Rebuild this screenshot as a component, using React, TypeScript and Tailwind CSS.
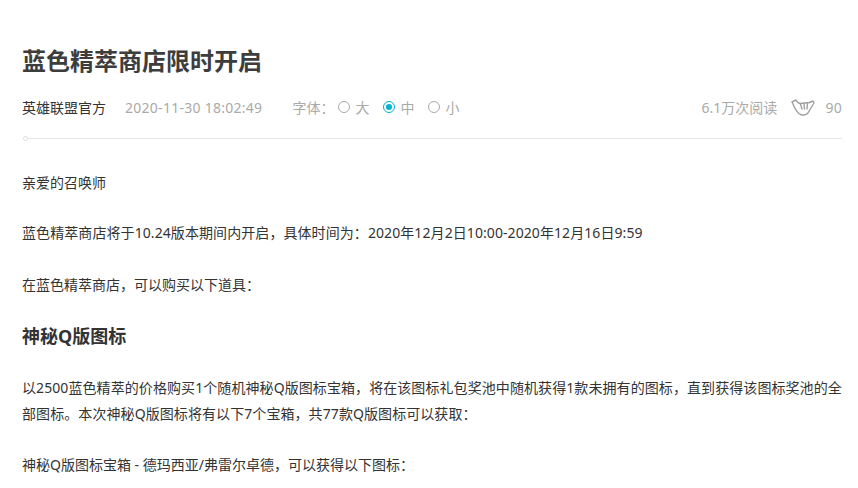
const font = "font-['Noto_Sans','Noto_Sans_CJK_SC',sans-serif]";

const Radio = ({ label, checked }: { label: string; checked?: boolean }) => (
  <span className="flex items-center mr-[14px]">
    {checked ? (
      <span className="w-[12px] h-[12px] rounded-full border border-[#00b2cc] flex items-center justify-center mr-[5px]">
        <span className="w-[6px] h-[6px] rounded-full bg-[#00b2cc]" />
      </span>
    ) : (
      <span className="w-[12px] h-[12px] rounded-full border border-[#aaaaaa] mr-[5px]" />
    )}
    {label}
  </span>
);

const HandIcon = () => (
  <svg width="24" height="17" viewBox="0 0 24 17" fill="none" stroke="#a0a0a0" strokeWidth="1.4" strokeLinejoin="round" strokeLinecap="round">
    <path d="M1 3 L5 1 C6 3 7.5 4.5 9.5 4.5 L18.5 3.5 L22 2 L23 4 L19 10.5 C17.5 14.5 15.5 16 12.5 16 L10.5 16 C6.5 15 3.5 9 1 3 Z" />
    <path d="M9.5 5 L11 10 M13 4.5 L13.5 10 M16.5 4 L16 10" />
  </svg>
);

export default function App() {
  return (
    <div className={`${font} w-[858px] h-[488px] overflow-hidden bg-white pl-[22px] pr-[16px] pt-[42px]`}>
      <h1 className="text-[24px] leading-[38px] font-bold text-[#3d3d3d]">蓝色精萃商店限时开启</h1>

      <div className="flex items-center justify-between mt-[16px] h-[22px] text-[14px] text-[#aaaaaa]">
        <div className="flex items-center">
          <span className="text-[#333333] mr-[19px]">英雄联盟官方</span>
          <span className="mr-[30px] tracking-[0.27px]">2020-11-30 18:02:49</span>
          <span className="mr-[4px]">字体：</span>
          <Radio label="大" />
          <Radio label="中" checked />
          <Radio label="小" />
        </div>
        <div className="flex items-center">
          <span className="mr-[14px]">6.1万次阅读</span>
          <HandIcon />
          <span className="ml-[10px] tracking-[0.3px]">90</span>
        </div>
      </div>

      <div className="relative ml-[6px] mt-[20px] h-[1px] bg-[#e6e6e6]">
        <span className="absolute left-[-5px] top-[-2px] w-[5px] h-[5px] rounded-full border border-[#dddddd] bg-white" />
      </div>

      <div className="mt-[31px] text-[14px] leading-[26px] text-[#333333]">
        <p>亲爱的召唤师</p>
        <p className="mt-[24px] tracking-[0.08px]">蓝色精萃商店将于10.24版本期间内开启，具体时间为：2020年12月2日10:00-2020年12月16日9:59</p>
        <p className="mt-[26px]">在蓝色精萃商店，可以购买以下道具：</p>
        <h2 className="mt-[25px] text-[18px] leading-[26px] font-bold">神秘Q版图标</h2>
        <p className="mt-[26px] tracking-[0.08px]">以2500蓝色精萃的价格购买1个随机神秘Q版图标宝箱，将在该图标礼包奖池中随机获得1款未拥有的图标，直到获得该图标奖池的全部图标。本次神秘Q版图标将有以下7个宝箱，共77款Q版图标可以获取：</p>
        <p className="mt-[25px]">神秘Q版图标宝箱 - 德玛西亚/弗雷尔卓德，可以获得以下图标：</p>
      </div>
    </div>
  );
}
